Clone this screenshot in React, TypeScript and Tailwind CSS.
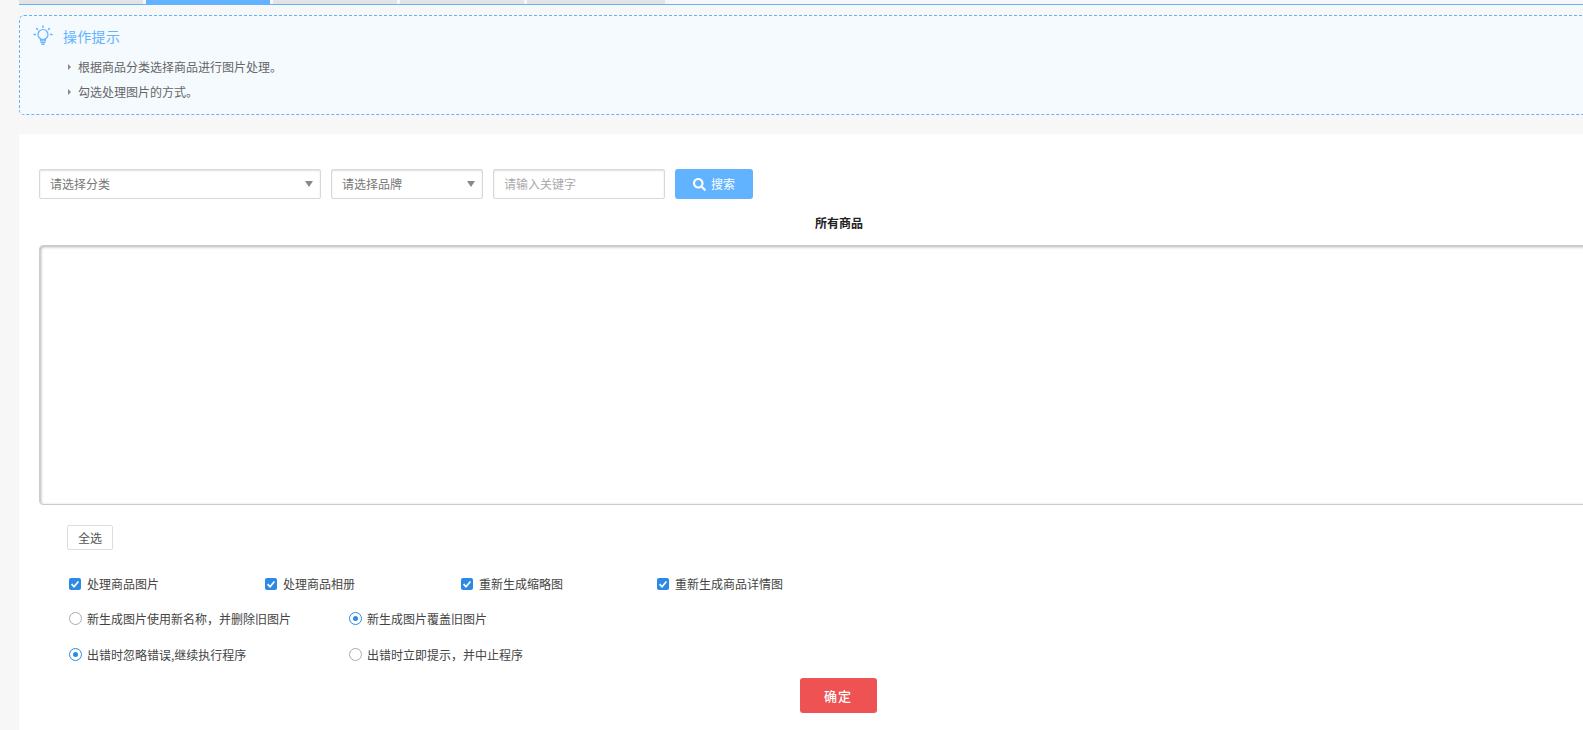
import { FaSearch } from 'react-icons/fa';

const FONT = "font-['Noto_Sans_CJK_SC','Noto_Sans',sans-serif]";

function Tab({ active, wide }: { active?: boolean; wide?: boolean }) {
  return (
    <div
      className={`h-[4px] ${wide ? 'w-[138px]' : 'w-[124px]'} ${active ? 'bg-[#62b3ff]' : 'bg-[#e4e4e4]'}`}
    />
  );
}

function Bulb() {
  return (
    <svg width="22" height="22" viewBox="0 0 22 22" fill="none" stroke="#62b3ff" strokeWidth="1.2" strokeLinecap="round">
      <circle cx="11" cy="9.5" r="5" />
      <path d="M8.6 14.2v1.6h4.8v-1.6" />
      <path d="M9 17.6h4M10 19.4h2" strokeWidth="1.4" />
      <path d="M11 1v1.4M2 9.5h1.4M18.6 9.5H20M4.6 3.4l1 1M17.4 3.4l-1 1" strokeWidth="1.4" />
    </svg>
  );
}

function Hint({ text }: { text: string }) {
  return (
    <li className="flex items-center h-[25px]">
      <span className="w-0 h-0 border-y-[3px] border-y-transparent border-l-[3px] border-l-[#888] ml-[48px] mr-[7px]" />
      <span>{text}</span>
    </li>
  );
}

function Select({ label, width }: { label: string; width: string }) {
  return (
    <div
      className={`${width} h-[30px] flex items-center justify-between pl-[10px] pr-[7px] border border-[#d8d8d8] rounded-[2px] shadow-[inset_0_1px_2px_rgba(0,0,0,0.12)] text-[#777]`}
    >
      <span>{label}</span>
      <span className="w-0 h-0 border-x-[4px] border-x-transparent border-t-[6px] border-t-[#888]" />
    </div>
  );
}

function Check({ label, width }: { label: string; width: string }) {
  return (
    <label className={`${width} flex items-center`}>
      <svg width="12" height="12" viewBox="0 0 12 12" className="mr-[6px] shrink-0">
        <rect width="12" height="12" rx="2" fill="#2a8ae6" />
        <path d="M2.6 6.2l2.4 2.5 4.4-5.2" fill="none" stroke="#fff" strokeWidth="1.7" />
      </svg>
      <span>{label}</span>
    </label>
  );
}

function Radio({ label, checked, width }: { label: string; checked?: boolean; width: string }) {
  return (
    <label className={`${width} flex items-center`}>
      <span
        className={`w-[13px] h-[13px] rounded-full border flex items-center justify-center mr-[5px] shrink-0 bg-white ${
          checked ? 'border-[#2a8ae6]' : 'border-[#aaa]'
        }`}
      >
        {checked && <span className="w-[5px] h-[5px] rounded-full bg-[#2a8ae6]" />}
      </span>
      <span>{label}</span>
    </label>
  );
}

export default function App() {
  return (
    <div className={`${FONT} h-[730px] overflow-hidden bg-[#f7f7f7] pl-[19px] text-[12px] leading-none text-[#555]`}>
      {/* Tabs, scrolled almost out of view */}
      <div className="flex gap-[3px] w-[1564px] border-b border-[#62b3ff]">
        <Tab />
        <Tab active />
        <Tab />
        <Tab />
        <Tab wide />
      </div>

      {/* 操作提示 */}
      <div className="w-[1640px] h-[100px] mt-[10px] bg-[#f5faff] border border-dashed border-[#62b3ff] rounded-[5px]">
        <div className="flex items-center h-[38px] pl-[12px] pt-[1px]">
          <Bulb />
          <span className="ml-[9px] text-[14px] tracking-[0.3px] text-[#62b3ff]">操作提示</span>
        </div>
        <ul className="text-[#666]">
          <Hint text="根据商品分类选择商品进行图片处理。" />
          <Hint text="勾选处理图片的方式。" />
        </ul>
      </div>

      {/* Main panel */}
      <div className="w-[1640px] h-[596px] mt-[19px] bg-white pl-[20px] pt-[35px]">
        <div className="flex gap-[10px]">
          <Select label="请选择分类" width="w-[282px]" />
          <Select label="请选择品牌" width="w-[152px]" />
          <div className="w-[172px] h-[30px] flex items-center pl-[10px] border border-[#d8d8d8] rounded-[2px] shadow-[inset_0_1px_2px_rgba(0,0,0,0.12)] text-[#aaa]">
            请输入关键字
          </div>
          <button className="w-[78px] h-[30px] flex items-center justify-center gap-[5px] bg-[#62b3ff] rounded-[3px] text-white">
            <FaSearch size={13} />
            搜索
          </button>
        </div>

        <div className="w-[1600px] h-[46px] pt-[2px] flex items-center justify-center font-bold text-[#222]">所有商品</div>

        <div className="w-[1598px] h-[260px] border border-[#ccc] rounded-[4px] shadow-[inset_1px_1px_3px_rgba(0,0,0,0.3)]" />

        <div className="pl-[28px]">
          <button className="mt-[20px] w-[46px] h-[25px] border border-[#ddd] rounded-[2px] text-[#555]">全选</button>

          <div className="flex mt-[28px] pl-[2px] h-[12px] text-[#444]">
            <Check label="处理商品图片" width="w-[196px]" />
            <Check label="处理商品相册" width="w-[196px]" />
            <Check label="重新生成缩略图" width="w-[196px]" />
            <Check label="重新生成商品详情图" width="w-[196px]" />
          </div>

          <div className="flex mt-[22px] pl-[2px] h-[13px] text-[#444]">
            <Radio label="新生成图片使用新名称，并删除旧图片" width="w-[280px]" />
            <Radio label="新生成图片覆盖旧图片" checked width="w-[280px]" />
          </div>

          <div className="flex mt-[23px] pl-[2px] h-[13px] text-[#444]">
            <Radio label="出错时忽略错误,继续执行程序" checked width="w-[280px]" />
            <Radio label="出错时立即提示，并中止程序" width="w-[280px]" />
          </div>
        </div>

        <div className="w-[1598px] flex justify-center mt-[17px]">
          <button className="w-[77px] h-[35px] bg-[#ee5253] rounded-[3px] text-white text-[13px] font-medium tracking-[1px]">确定</button>
        </div>
      </div>
    </div>
  );
}
